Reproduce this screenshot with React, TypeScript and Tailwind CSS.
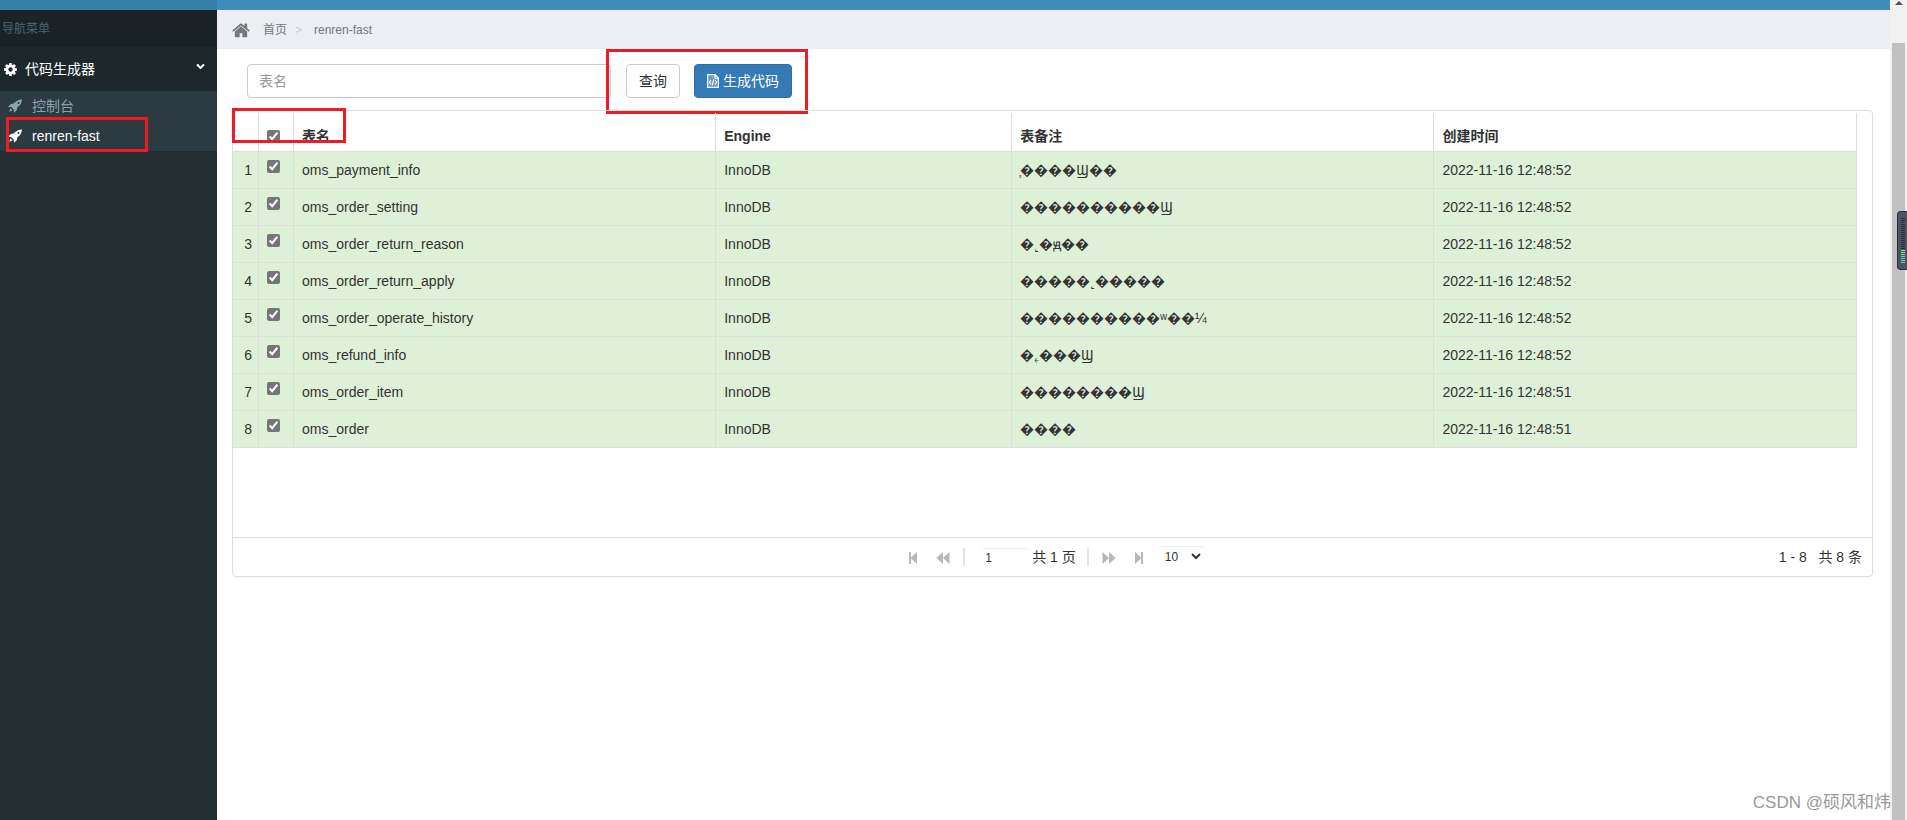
import { useState } from "react";
import type { ReactNode } from "react";
import { FaAngleDown } from "react-icons/fa";

interface TableRow {
  name: string;
  engine: string;
  comment: string;
  createTime: string;
}

const rows: TableRow[] = [
  { name: "oms_payment_info", engine: "InnoDB", comment: "\u05A7\uFFFD\uFFFD\uFFFD\uFFFD\u03E2\uFFFD\uFFFD", createTime: "2022-11-16 12:48:52" },
  { name: "oms_order_setting", engine: "InnoDB", comment: "\uFFFD".repeat(10) + "\u03E2", createTime: "2022-11-16 12:48:52" },
  { name: "oms_order_return_reason", engine: "InnoDB", comment: "\uFFFD\u02FB\uFFFD\u052D\uFFFD\uFFFD", createTime: "2022-11-16 12:48:52" },
  { name: "oms_order_return_apply", engine: "InnoDB", comment: "\uFFFD".repeat(5) + "\u02FB" + "\uFFFD".repeat(5), createTime: "2022-11-16 12:48:52" },
  { name: "oms_order_operate_history", engine: "InnoDB", comment: "\uFFFD".repeat(10) + "\u02B7\uFFFD\uFFFD\u00BC", createTime: "2022-11-16 12:48:52" },
  { name: "oms_refund_info", engine: "InnoDB", comment: "\uFFFD\u02FF\uFFFD\uFFFD\uFFFD\u03E2", createTime: "2022-11-16 12:48:52" },
  { name: "oms_order_item", engine: "InnoDB", comment: "\uFFFD".repeat(8) + "\u03E2", createTime: "2022-11-16 12:48:51" },
  { name: "oms_order", engine: "InnoDB", comment: "\uFFFD".repeat(4), createTime: "2022-11-16 12:48:51" },
];

function CogIcon() {
  return (
    <svg viewBox="0 128 1536 1536" className="size-[13px]" fill="currentColor">
      <path d="M1024 896q0-106-75-181t-181-75-181 75-75 181 75 181 181 75 181-75 75-181zm512-109v222q0 12-8 23t-20 13l-185 28q-19 54-39 91 35 50 107 138 10 12 10 25t-9 23q-27 37-99 108t-94 71q-12 0-26-9l-138-108q-44 23-91 38-16 136-29 186-7 28-36 28h-222q-14 0-24.500-8.500t-11.500-21.500l-28-184q-49-16-90-37l-141 107q-10 9-25 9-14 0-25-11-126-114-165-168-7-10-7-23 0-12 8-23 15-21 51-66.500t54-70.500q-27-50-41-99l-183-27q-13-2-21-12.500t-8-23.500v-222q0-12 8-23t19-13l186-28q14-46 39-92-40-57-107-138-10-12-10-24 0-10 9-23 26-36 98.500-107.500t94.500-71.500q13 0 26 10l138 107q44-23 91-38 16-136 29-186 7-28 36-28h222q14 0 24.500 8.500t11.500 21.500l28 184q49 16 90 37l142-107q9-9 24-9 13 0 25 10 129 119 165 170 7 8 7 22 0 12-8 23-15 21-51 66.500t-54 70.500q26 50 41 98l183 28q13 2 21 12.500t8 23.500z" />
    </svg>
  );
}

function RocketIcon() {
  return (
    <svg viewBox="0 0 14 14" className="size-[14px]" fill="currentColor" fillRule="evenodd">
      <path d="M14 .5C10.500.7 8 2 6 4.300L2.500 5.200 0 8l3.200.1 2.600 2.600.2 3.100 2.700-2.500.8-3.200C12.300 6.300 13.700 4 14 .5zM10.500 3a1 1 0 1 1 0 2 1 1 0 0 1 0-2z" />
      <path d="M2.600 9.300 4.500 11.200 1.200 12.800z" />
    </svg>
  );
}

function HomeIcon() {
  return (
    <svg viewBox="0 200 1664 1400" className="h-[15px] w-[18px]" fill="currentColor">
      <path d="M1408 992v480q0 26-19 45t-45 19h-384v-384h-256v384h-384q-26 0-45-19t-19-45v-480q0-1 .5-3t.5-3l575-474 575 474q1 2 1 6zm223-69l-62 74q-8 9-21 11h-3q-13 0-21-7l-692-577-692 577q-12 8-24 7-13-2-21-11l-62-74q-8-10-7-23.500t11-21.500l719-599q32-26 76-26t76 26l244 204v-195q0-14 9-23t23-9h192q14 0 23 9t9 23v408l219 182q10 8 11 21.500t-7 23.500z" />
    </svg>
  );
}

function CodeFileIcon() {
  return (
    <svg viewBox="0 0 12 14" className="h-[14px] w-3" fill="none" stroke="currentColor">
      <path d="M.6.6h7.400l3.400 3.400v9.400H.6z" fill="currentColor" fillOpacity="0.25" strokeWidth="1.200" />
      <path d="M7.800.8v3.400h3.400" />
      <path d="M4 6 2.300 8.200 4 10.400M8 6l1.700 2.200L8 10.400M6.700 5.300l-1.400 6" strokeWidth="1.100" />
    </svg>
  );
}

function Sidebar() {
  return (
    <aside className="w-[217px] shrink-0 bg-[#222d32]">
      <div className="h-[10px] bg-[#367fa9]" />
      <div className="flex h-[37px] items-center bg-[#1a2226] pl-[2px] text-xs text-[#4b646f]">
        导航菜单
      </div>
      <nav>
        <a href="#" className="flex h-11 items-center bg-[#1e282c] pl-1 pr-[10px] text-sm text-white">
          <CogIcon />
          <span className="ml-2 flex-1">代码生成器</span>
          <FaAngleDown className="mb-[6px] size-[13px]" />
        </a>
        <ul className="bg-[#2c3b41] text-sm">
          <li>
            <a href="#" className="flex h-[30px] items-center gap-[10px] pl-2 text-[#8aa4af]">
              <RocketIcon />
              控制台
            </a>
          </li>
          <li className="relative">
            <a href="#" className="flex h-[30px] items-center gap-[10px] pl-2 text-white">
              <RocketIcon />
              renren-fast
            </a>
            <div className="pointer-events-none absolute -top-1 left-[6px] h-[35px] w-[142px] border-3 border-[#ed1c24]" />
          </li>
        </ul>
      </nav>
    </aside>
  );
}

function Breadcrumb() {
  return (
    <div className="flex h-[39px] items-center bg-[#ebeff4] pb-[7px] pl-[15px] pt-2 text-xs text-[#777]">
      <HomeIcon />
      <a href="#" className="ml-[13px]">
        首页
      </a>
      <span className="mx-2 w-[11px] text-[#ccc]">&gt;</span>
      <span>renren-fast</span>
    </div>
  );
}

function Toolbar() {
  return (
    <div className="flex h-[61px] items-start pl-[30px] pt-[15px] text-sm">
      <input
        type="text"
        aria-label="表名"
        placeholder="表名"
        className="h-[34px] w-[364px] rounded border border-[#ccc] px-[11px] placeholder:text-[#999]"
      />
      <div className="relative ml-[15px] flex gap-[14px]">
        <button type="button" className="h-[34px] rounded border border-[#ccc] bg-white px-3 text-[#333]">
          查询
        </button>
        <button
          type="button"
          className="flex h-[34px] items-center gap-1 rounded border border-[#2e6da4] bg-[#337ab7] px-3 text-white"
        >
          <CodeFileIcon />
          生成代码
        </button>
        <div className="pointer-events-none absolute -bottom-4 -left-5 -right-4 -top-[15px] border-3 border-[#ed1c24]" />
      </div>
    </div>
  );
}

function HeaderCell({ children }: { children?: ReactNode }) {
  return (
    <th className="h-[39px] border-b border-r border-[#ddd] px-2 pt-2 text-left align-middle font-bold">
      {children}
    </th>
  );
}

function Cell({ children }: { children: ReactNode }) {
  return (
    <td className="overflow-hidden whitespace-nowrap border-b border-r border-[#ddd] px-2">{children}</td>
  );
}

function PagerIcon({ d, label }: { d: string; label: string }) {
  return (
    <button type="button" aria-label={label} className="flex h-6 w-4 items-center justify-center pt-[2px] text-[#b8b8b8]">
      <svg viewBox="0 0 14 12" className="h-3 w-[14px]" fill="currentColor">
        <path d={d} />
      </svg>
    </button>
  );
}

function Pager() {
  return (
    <div className="grid h-[39px] grid-cols-[1fr_auto_1fr] items-center border-t border-[#ddd]">
      <div />
      <div className="flex items-center pl-1">
        <PagerIcon label="first" d="M3 0h2v5.400L11 0v12L5 6.600V12H3z" />
        <span className="w-[14px]" />
        <PagerIcon label="previous" d="M7 0v12L.5 6zM13.500 0v12L7 6z" />
        <span className="ml-3 mr-4 h-[18px] w-[2px] bg-[#e5e5e5]" />
        <input
          type="text"
          aria-label="page"
          defaultValue="1"
          className="h-[18px] w-12 rounded-sm border-t border-[#eee] px-1 text-xs"
        />
        <span className="mx-[3px]">共 1 页</span>
        <span className="ml-2 mr-3 h-[18px] w-[2px] bg-[#e5e5e5]" />
        <PagerIcon label="next" d="M.5 0 7 6 .5 12zM7 0l6.500 6L7 12z" />
        <span className="w-[14px]" />
        <PagerIcon label="last" d="M3 0l6 5.400V0h2v12H9V6.600L3 12z" />
        <select
          aria-label="rows per page"
          defaultValue="10"
          className="mb-[2px] ml-[10px] h-5 w-[47px] rounded border-t border-[#eee] bg-white pl-1 text-xs"
        >
          <option>10</option>
          <option>30</option>
          <option>50</option>
        </select>
      </div>
      <div className="whitespace-pre pr-[10px] text-right">{"1 - 8   共 8 条"}</div>
    </div>
  );
}

function DataGrid() {
  const [selected, setSelected] = useState<boolean[]>(rows.map(() => true));
  const allSelected = selected.every(Boolean);

  return (
    <div className="relative ml-[15px] mr-[17px] rounded border border-[#ddd] text-sm text-[#333]">
      <div className="min-h-[426px] pr-[15px] pt-[2px]">
        <table className="w-full table-fixed border-separate border-spacing-0">
          <colgroup>
            <col className="w-[26px]" />
            <col className="w-[35px]" />
            <col className="w-[26%]" />
            <col className="w-[296px]" />
            <col className="w-[26%]" />
            <col />
          </colgroup>
          <thead>
            <tr>
              <HeaderCell />
              <HeaderCell>
                <input
                  type="checkbox"
                  aria-label="全选"
                  checked={allSelected}
                  onChange={() => setSelected(rows.map(() => !allSelected))}
                  className="block size-[13px] accent-[#757575]"
                />
              </HeaderCell>
              <HeaderCell>表名</HeaderCell>
              <HeaderCell>Engine</HeaderCell>
              <HeaderCell>表备注</HeaderCell>
              <HeaderCell>创建时间</HeaderCell>
            </tr>
          </thead>
          <tbody>
            {rows.map((row, i) => (
              <tr key={row.name} className={selected[i] ? "h-[37px] bg-[#dff0d8]" : "h-[37px]"}>
                <td className="border-b border-r border-[#ddd] pr-[6px] text-right">{i + 1}</td>
                <td className="border-b border-r border-[#ddd] px-2 pb-[7px]">
                  <input
                    type="checkbox"
                    aria-label={row.name}
                    checked={selected[i]}
                    onChange={() => setSelected(selected.map((s, j) => (j === i ? !s : s)))}
                    className="block size-[13px] accent-[#757575]"
                  />
                </td>
                <Cell>{row.name}</Cell>
                <Cell>{row.engine}</Cell>
                <Cell>{row.comment}</Cell>
                <Cell>{row.createTime}</Cell>
              </tr>
            ))}
          </tbody>
        </table>
      </div>
      <Pager />
      <div className="pointer-events-none absolute -left-px -top-[3px] h-[35px] w-[114px] border-3 border-[#ed1c24]" />
    </div>
  );
}

function Scrollbar() {
  return (
    <div className="flex w-[17px] shrink-0 flex-col items-center bg-[#f1f1f1]">
      <svg viewBox="0 0 8 4" className="mt-[1px] h-1 w-2" fill="#505050">
        <path d="M4 0l4 4H0z" />
      </svg>
      <div className="mt-[38px] w-[13px] flex-1 bg-[#c1c1c1]" />
    </div>
  );
}

function LevelMeter() {
  return (
    <div className="absolute right-0 top-[211px] flex h-[59px] w-[10px] flex-col items-end justify-center gap-px rounded-l border-y border-l border-[#2b2d3a] bg-[#4d5363]">
      {Array.from({ length: 23 }, (_, i) => (
        <span
          key={i}
          className={
            i < 16 ? "mr-[2px] h-px w-1 bg-[#2b2d3a]" : i < 19 ? "mr-[2px] h-px w-1 bg-[#8be28b]" : "mr-[2px] h-px w-1 bg-[#55dcc0]"
          }
        />
      ))}
    </div>
  );
}

export default function App() {
  return (
    <div className="relative flex min-h-screen bg-white font-['Liberation_Sans','Noto_Sans_CJK_SC',sans-serif]">
      <Sidebar />
      <main className="min-w-0 flex-1">
        <div className="h-[10px] bg-[#3c8dbc]" />
        <Breadcrumb />
        <Toolbar />
        <DataGrid />
      </main>
      <Scrollbar />
      <LevelMeter />
      <div className="absolute bottom-[5px] right-4 text-[17px] text-[#999]">CSDN @硕风和炜</div>
    </div>
  );
}
